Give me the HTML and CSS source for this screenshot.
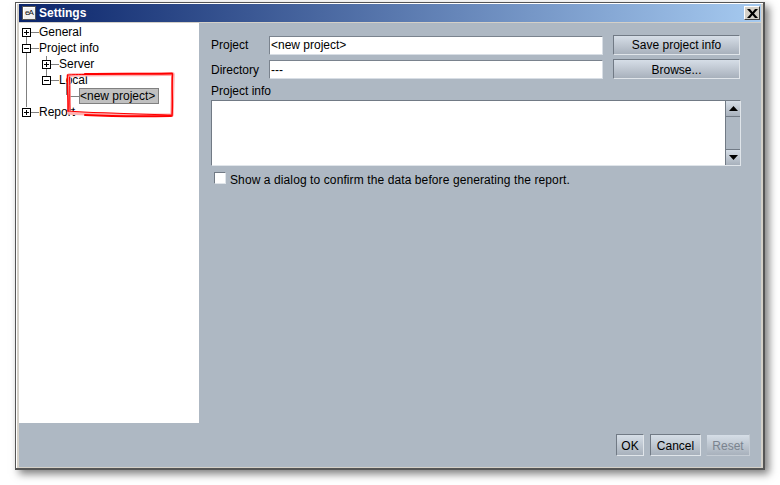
FILE: index.html
```html
<!DOCTYPE html>
<html lang="en">
<head>
<meta charset="utf-8">
<title>Settings</title>
<link rel="stylesheet" href="styles.css">
</head>
<body>
<div class="window">
  <div class="titlebar">
    <span class="app-icon">eA</span>
    <span class="title">Settings</span>
    <button class="close" aria-label="Close">
      <svg width="11" height="9" viewBox="0 0 11 9"><path d="M0 0h3l2.500 3L8 0h3L7 4.500 11 9H8L5.500 6 3 9H0l4-4.500z" fill="#000"/></svg>
    </button>
  </div>
  <div class="body">
    <div class="top">
      <div class="tree">
        <span class="vline v-root"></span>
        <span class="vline v-sub"></span>
        <span class="vline v-leaf"></span>
        <div class="row"><span class="exp plus"></span><span class="conn"></span><span>General</span></div>
        <div class="row"><span class="exp"></span><span class="conn"></span><span>Project info</span></div>
        <div class="row lvl2"><span class="exp plus"></span><span class="conn"></span><span>Server</span></div>
        <div class="row lvl2"><span class="exp"></span><span class="conn"></span><span>Local</span></div>
        <div class="row lvl3"><span class="conn leaf"></span><span class="selected">&lt;new project&gt;</span></div>
        <div class="row"><span class="exp plus"></span><span class="conn"></span><span>Report</span></div>
        <svg class="scribble" width="120" height="56" viewBox="0 0 120 56">
          <g fill="none" stroke-linejoin="round" stroke-linecap="round">
            <path stroke="#ffb0b0" stroke-width="3.500" d="M4 4C30 3 70 4 108 3L107 44C70 45 30 43 4 42z"/>
            <g stroke="#f00">
              <path stroke-width="1" d="M3 4C14 3 20 4 30 3"/>
              <path stroke-width="2" d="M20 3C50 2.500 85 3 107 2.500"/>
              <path stroke-width="1.500" d="M107.500 3C106.500 16 108 30 107 45"/>
              <path stroke-width="1.500" d="M2.500 4C2 16 3.500 28 3 40"/>
              <path stroke-width="1" d="M4.500 6C5 18 4.500 28 5 39"/>
              <path stroke-width="1.200" d="M3 40C30 42 70 43 106 44"/>
              <path stroke-width="2" d="M20 44C50 45.500 80 45.500 106 45"/>
            </g>
          </g>
        </svg>
      </div>
      <div class="panel">
        <div class="form-grid">
          <label class="lbl">Project</label>
          <div class="field">&lt;new project&gt;</div>
          <button class="btn wide">Save project info</button>
          <label class="lbl low">Directory</label>
          <div class="field low">---</div>
          <button class="btn wide low">Browse...</button>
        </div>
        <div class="info-label">Project info</div>
        <div class="textarea">
          <div class="text-body"></div>
          <div class="scrollbar">
            <span class="arrow"><svg width="9" height="5" viewBox="0 0 9 5"><path d="M4.500 0L9 5H0z" fill="#000"/></svg></span>
            <span class="track"></span>
            <span class="arrow"><svg width="9" height="5" viewBox="0 0 9 5"><path d="M0 0h9L4.500 5z" fill="#000"/></svg></span>
          </div>
        </div>
        <label class="check"><span class="box"></span><span class="check-text">Show a dialog to confirm the data before generating the report.</span></label>
      </div>
    </div>
    <div class="footer">
      <button class="btn small ok">OK</button>
      <button class="btn small cancel">Cancel</button>
      <button class="btn small reset" disabled>Reset</button>
    </div>
  </div>
</div>
</body>
</html>
```

FILE: styles.css
```css
* { box-sizing: border-box; }
html, body { margin: 0; height: 100%; background: #fff; }
body {
  padding: 2px 0 0 15px;
  font-family: "Liberation Sans", Arial, sans-serif;
  font-size: 12px;
  color: #000;
  overflow: hidden;
}
.window {
  width: 750px;
  height: 468px;
  display: flex;
  flex-direction: column;
  background: #d4d0c8;
  border: 1px solid #555;
  border-right-width: 2px;
  border-bottom-width: 2px;
  padding: 1px 2px 1px 3px;
  box-shadow: 4px 4px 8px rgba(0, 0, 0, 0.5), inset 1px 1px 0 #fff;
}
.titlebar {
  height: 18px;
  flex: none;
  display: flex;
  align-items: center;
  padding: 0 1px 0 3px;
  background: linear-gradient(90deg, #0a246a, #a6caf0);
  color: #fff;
}
.app-icon {
  width: 14px;
  height: 14px;
  border: 1px solid #555;
  background: #f0f0f0;
  box-shadow: inset 1px 1px 0 #fff;
  color: #111;
  font-size: 8px;
  line-height: 12px;
  text-align: center;
  letter-spacing: -1px;
}
.title {
  margin-left: 3px;
  font-weight: bold;
  font-size: 12px;
}
.close {
  margin-left: auto;
  width: 16px;
  height: 14px;
  padding: 0;
  display: flex;
  align-items: center;
  justify-content: center;
  background: #d4d0c8;
  border: 1px solid;
  border-color: #fff #404040 #404040 #fff;
}
.body {
  flex: 1;
  margin-top: 1px;
  display: flex;
  flex-direction: column;
  background: #aeb8c3;
  min-height: 0;
}
.top {
  height: 400px;
  flex: none;
  display: flex;
}
.tree {
  position: relative;
  width: 180px;
  flex: none;
  background: #fff;
  padding: 1px 0 0 3px;
}
.row {
  height: 16px;
  display: flex;
  align-items: center;
  white-space: nowrap;
  position: relative;
}
.lvl2 { padding-left: 20px; }
.lvl3 { padding-left: 45px; }
.exp {
  position: relative;
  width: 9px;
  height: 9px;
  flex: none;
  background: #fff;
  border: 1px solid #000;
  z-index: 1;
}
.exp::before {
  content: "";
  position: absolute;
  left: 1px;
  right: 1px;
  top: 3px;
  height: 1px;
  background: #000;
}
.plus::after {
  content: "";
  position: absolute;
  left: 3px;
  top: 1px;
  bottom: 1px;
  width: 1px;
  background: #000;
}
.conn {
  width: 8px;
  height: 1px;
  background: #808080;
  flex: none;
}
.conn.leaf { width: 12px; }
.selected {
  height: 16px;
  width: 80px;
  line-height: 14px;
  padding-left: 0;
  background: #c0c0c0;
  border: 1px solid #808080;
}
.vline {
  position: absolute;
  width: 1px;
  background: #808080;
}
.v-root { left: 7px; top: 12px; height: 72px; }
.v-sub { left: 27px; top: 33px; height: 20px; }
.v-leaf { left: 47px; top: 60px; height: 12px; }
.scribble {
  position: absolute;
  left: 46px;
  top: 48px;
  z-index: 2;
  pointer-events: none;
}
.panel {
  flex: 1;
  min-width: 0;
  padding: 12px 21px 0 12px;
}
.form-grid {
  display: grid;
  grid-template-columns: 58px 334px 137px;
  grid-auto-rows: 20px;
  row-gap: 4px;
  align-items: center;
}
.lbl { white-space: nowrap; }
.lbl.low { padding-top: 1px; }
.field {
  height: 19px;
  line-height: 16px;
  padding-left: 1px;
  background: #fff;
  border: 1px solid;
  border-color: #7a838e #d8dee5 #d8dee5 #7a838e;
  white-space: nowrap;
}
.field.low { line-height: 18px; }
.btn {
  font-family: inherit;
  font-size: 12px;
  color: #000;
  padding: 0;
  background: linear-gradient(180deg, #d6dee7, #a8b1bc);
  border: 1px solid;
  border-color: #717a85 #e0e5ea #e0e5ea #717a85;
}
.wide {
  height: 20px;
  width: 127px;
  margin-left: 10px;
  justify-self: end;
}
.wide.low { padding-top: 1px; }
.info-label {
  margin-top: 5px;
  height: 14px;
  line-height: 14px;
}
.textarea {
  margin-top: 2px;
  width: 530px;
  height: 66px;
  display: flex;
  background: #fff;
  border: 1px solid;
  border-color: #717a85 #e0e5ea #e0e5ea #717a85;
}
.text-body { flex: 1; }
.scrollbar {
  width: 15px;
  flex: none;
  display: flex;
  flex-direction: column;
  background: #aeb8c3;
  border-left: 1px solid #717a85;
}
.arrow {
  height: 16px;
  flex: none;
  display: flex;
  align-items: center;
  justify-content: center;
  background: linear-gradient(180deg, #d6dee7, #a8b1bc);
  border-bottom: 1px solid #717a85;
}
.arrow:last-child {
  border-bottom: 0;
  border-top: 1px solid #717a85;
}
.track { flex: 1; }
.check {
  margin-top: 6px;
  padding-left: 3px;
  display: flex;
  align-items: flex-start;
  gap: 4px;
  height: 16px;
}
.box {
  width: 12px;
  height: 12px;
  background: #fff;
  border: 1px solid;
  border-color: #717a85 #e0e5ea #e0e5ea #717a85;
}
.check-text {
  padding-top: 1px;
  letter-spacing: 0.1px;
}
.footer {
  flex: 1;
  display: flex;
  justify-content: flex-end;
  align-items: flex-start;
  padding: 11px 11px 0 0;
  gap: 5px;
}
.small { height: 22px; padding-top: 1px; }
.ok { width: 28px; margin-right: 1px; }
.cancel { width: 51px; }
.reset { width: 44px; color: #7b848f; border-color: #aeb8c3 #c5ccd4 #c5ccd4 #aeb8c3; }
```
